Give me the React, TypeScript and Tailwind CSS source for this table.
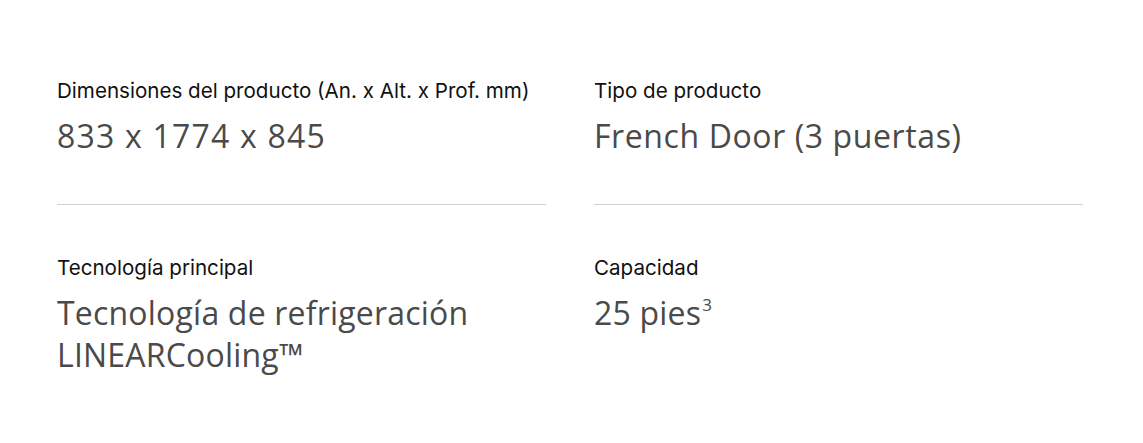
const specs = [
  { label: "Dimensiones del producto (An. x Alt. x Prof. mm)", value: <span className="tracking-[1.2px]">833 x 1774 x 845</span> },
  { label: "Tipo de producto", value: <span className="tracking-[0.6px]">French Door (3 puertas)</span> },
  { label: "Tecnología principal", value: <>Tecnología de refrigeración LINEARCooling™</> },
  {
    label: "Capacidad",
    value: (
      <>
        25 pies<sup className="text-[17px] tracking-normal relative -top-[14px] ml-[1px]">3</sup>
      </>
    ),
  },
];

export default function App() {
  return (
    <div className="w-[1143px] h-[443px] bg-white overflow-hidden rounded-tr-[14px]">
      <div className="grid grid-cols-2 gap-x-12 pl-[57px] pr-[60px] pt-[77px]">
        {specs.map((s, i) => (
          <div key={s.label} className={i < 2 ? "border-b border-[#cfcfcf] pb-[47px]" : "pt-[49px]"}>
            <div className="text-[20.6px] leading-[28px] text-[#111] font-['Inter',sans-serif]">
              {s.label}
            </div>
            <div className="mt-[10px] text-[32px] leading-[42px] tracking-[0.2px] text-[#4a4a4a] font-['Open_Sans',sans-serif]">
              {s.value}
            </div>
          </div>
        ))}
      </div>
    </div>
  );
}
